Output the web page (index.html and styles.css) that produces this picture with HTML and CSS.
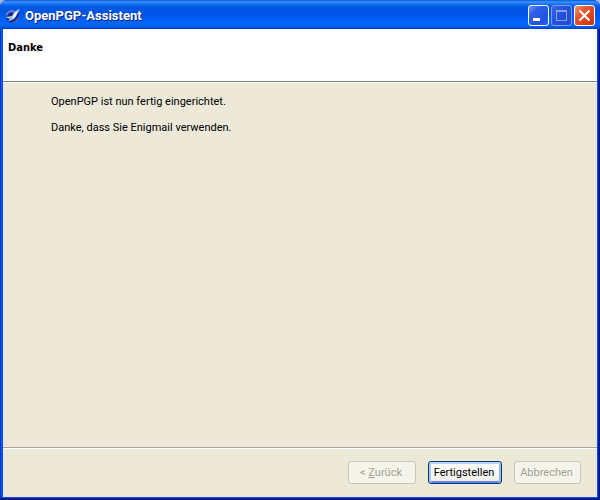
FILE: index.html
```html
<!DOCTYPE html>
<html lang="de">
<head>
<meta charset="utf-8">
<title>OpenPGP-Assistent</title>
<link rel="stylesheet" href="styles.css">
</head>
<body>
<div class="window">
  <div class="titlebar">
    <svg class="app-icon" width="16" height="16" viewBox="0 0 16 16" aria-hidden="true">
      <circle cx="7.5" cy="8.5" r="6.5" fill="#1d2688"/>
      <path d="M1 6C3 2 7 1 11 3L9 5L5 6L1 8Z" fill="#5b86dc"/>
      <path d="M3 6C5 4 7 4 9 5L6 8L2 9Z" fill="#1d2688"/>
      <path d="M6 14C10 14 12 12 13 8C15 11 12 15 8 15Z" fill="#4a68cc"/>
      <path d="M15 1C11 2 9 4 7 8L0 9L5 11L3 13C7 13 11 10 12 6Z" fill="#9cc6f2"/>
      <path d="M14 2L9 6L7 11C10 9 11 8 12 5Z" fill="#fff"/>
    </svg>
    <span class="caption">OpenPGP-Assistent</span>
    <div class="controls">
      <button class="control" type="button" aria-label="Minimieren">
        <svg width="19" height="19" viewBox="0 0 19 19"><path d="M4 12h7v3H4z" fill="#fff"/></svg>
      </button>
      <button class="control maximize" type="button" aria-label="Maximieren" disabled>
        <svg width="19" height="19" viewBox="0 0 19 19"><path d="M4 4h11v11H4zM5 6v8h9V6z" fill="#8a9fee" fill-rule="evenodd"/></svg>
      </button>
      <button class="control close" type="button" aria-label="Schließen">
        <svg width="19" height="19" viewBox="0 0 19 19"><path d="M4.500 4.500L14.500 14.500M14.500 4.500L4.500 14.500" stroke="#fff" stroke-width="2.200"/></svg>
      </button>
    </div>
  </div>
  <header class="header"><h1>Danke</h1></header>
  <main class="content">
    <p>OpenPGP ist nun fertig eingerichtet.</p>
    <p>Danke, dass Sie Enigmail verwenden.</p>
  </main>
  <footer class="footer">
    <button class="button back" type="button" disabled>&lt; <u>Z</u>urück</button>
    <button class="button default" type="button">Fertigstellen</button>
    <button class="button" type="button" disabled>Abbrechen</button>
  </footer>
</div>
</body>
</html>
```
FILE: styles.css
```css
* { box-sizing: border-box; }

body {
  margin: 0;
  background: #a6b4dc;
  font: 11px/13px Roboto, "Liberation Sans", sans-serif;
  color: #000;
}

.window {
  display: flex;
  flex-direction: column;
  min-height: 100vh;
  padding: 0 3px 3px;
  border-radius: 7px 7px 0 0;
  overflow: hidden;
  background: linear-gradient(90deg, #0831d9 1px, #1659ee 1px, #1659ee 2px, #0a4be0 2px, #0a4be0 calc(100% - 2px), #0020b0 calc(100% - 2px), #0020b0 calc(100% - 1px), #00138c calc(100% - 1px));
  box-shadow: inset 0 -1px #00138c, inset 0 -2px #001ea0;
}

.titlebar {
  display: flex;
  align-items: center;
  height: 29px;
  margin: 0 -3px;
  padding: 2px 5px 0;
  background: linear-gradient(#0a56d8 0, #3a93ff 2px, #1673f5 4px, #0058e0 7px, #0054e3 14px, #0062fa 20px, #0068ff 25px, #0058e6 27px, #0040c0 29px);
}

.app-icon { margin-right: 4px; }

.caption {
  flex: 1;
  font: bold 13px/16px Roboto, sans-serif;
  color: #fff;
  text-shadow: 1px 1px #0a1f7c;
}

.controls { display: flex; gap: 2px; }

.control {
  display: block;
  width: 21px;
  height: 21px;
  padding: 0;
  border: 1px solid #fff;
  border-radius: 3px;
  background: linear-gradient(135deg, #6f96f8, #2f62ea 30%, #1f52e0 75%, #2f62f0);
}

.control svg { display: block; }

.maximize {
  border-color: #7b9cf0;
  background: linear-gradient(135deg, #3a67e6, #2050dc 50%, #1d4ddc);
}

.close { background: linear-gradient(135deg, #f0997c, #e4572e 35%, #d83c10 80%, #c43a14); }

.header {
  height: 53px;
  padding: 12px 5px;
  background: #fff;
  border-bottom: 1px solid #808080;
}

h1 {
  margin: 0;
  font: bold 11px/13px "DejaVu Sans Condensed", sans-serif;
}

.content {
  flex: 1;
  padding: 12px 48px;
  background: #ece9d8;
  border-top: 1px solid #fff;
  border-bottom: 1px solid #a5a295;
}

p { margin: 0 0 13px; }

.footer {
  display: flex;
  justify-content: flex-end;
  gap: 12px;
  padding: 12px 16px 13px;
  background: #ece9d8;
  border-top: 1px solid #fff;
}

.button {
  width: 67px;
  height: 23px;
  padding: 0 2px 1px 0;
  border: 1px solid #003c74;
  border-radius: 3px;
  background: linear-gradient(#fff, #f4f3ee 80%, #e4e0d6);
  font: inherit;
  color: #000;
}

.button:disabled {
  border-color: #c9c7ba;
  background: #f5f4ea;
  color: #a1a192;
}

.back { width: 68px; }

.default {
  width: 74px;
  box-shadow: inset 0 2px #bcd4f6, inset 2px 0 #a9c4f2, inset -2px 0 #98b8ea, inset 0 -2px #6982ee;
}
```
